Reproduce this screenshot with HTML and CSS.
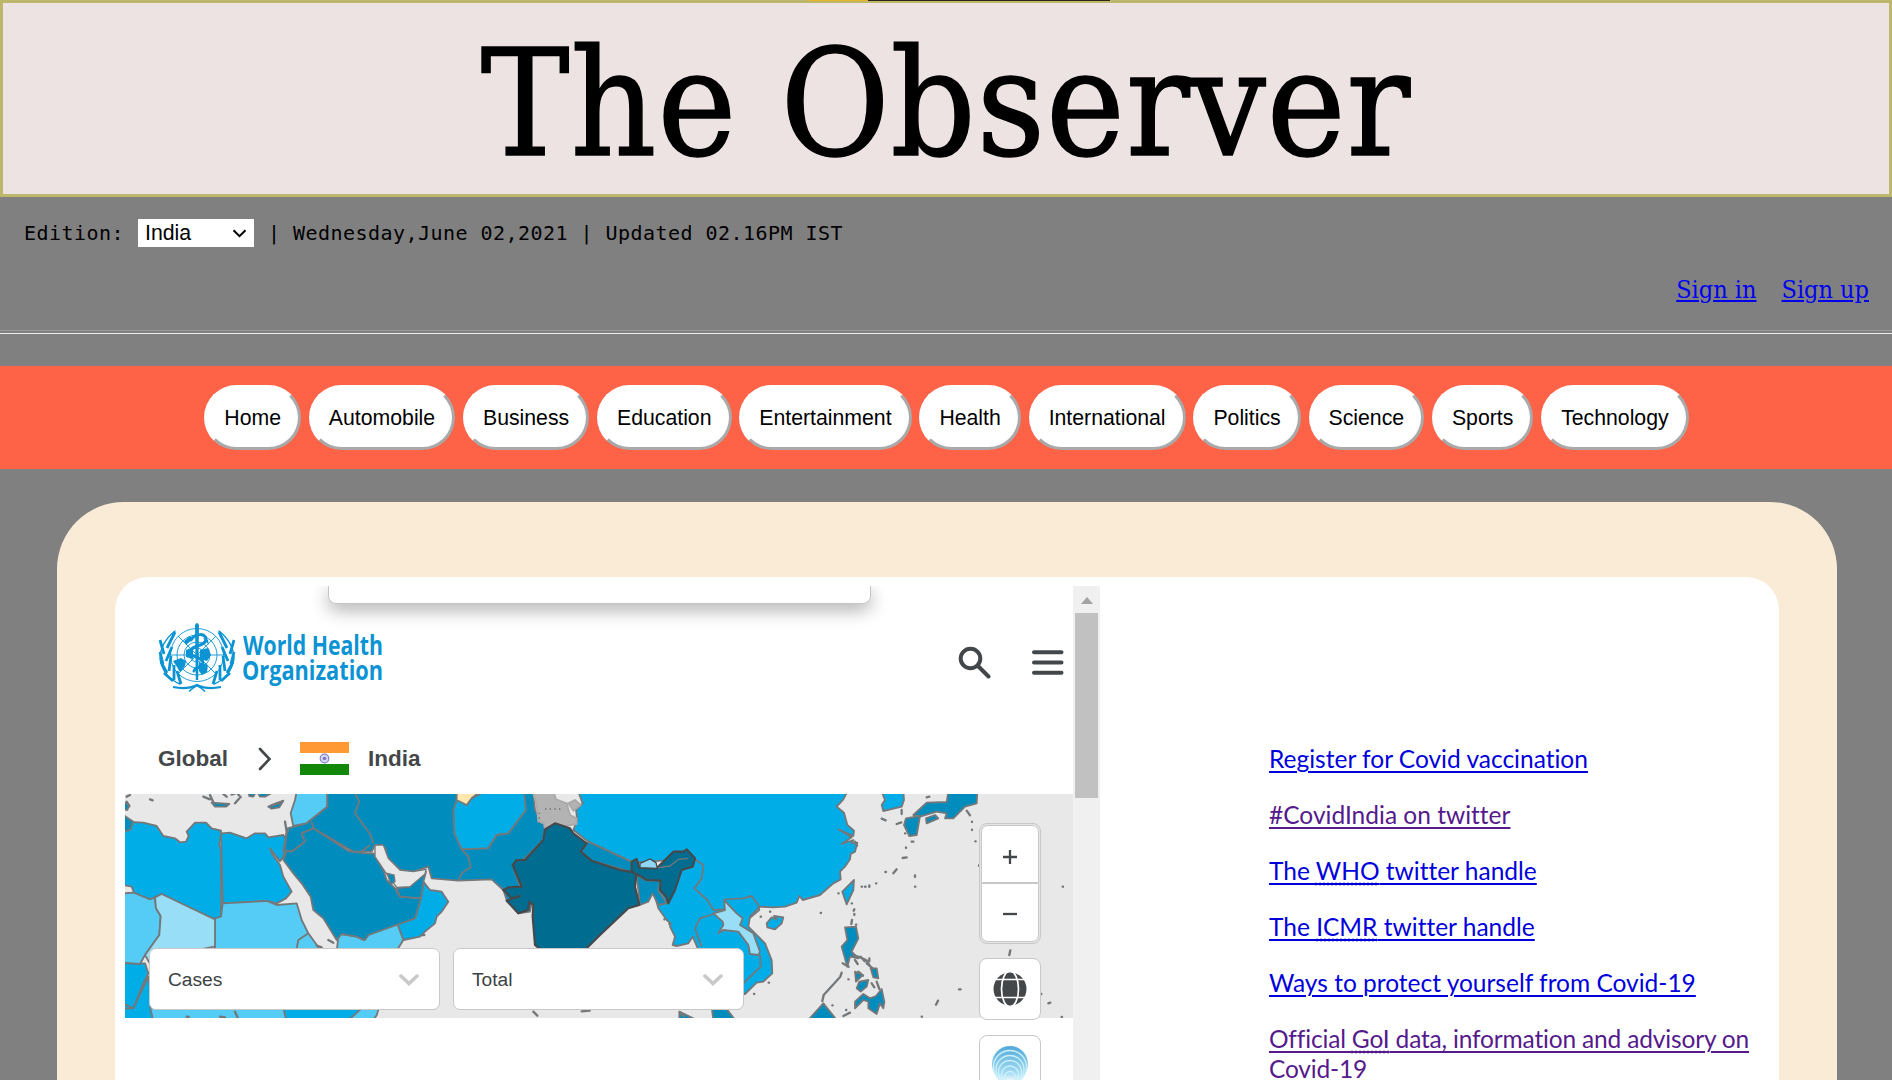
FILE: index.html
```html
<!DOCTYPE html>
<html lang="en">
<head>
<meta charset="utf-8">
<title>The Observer</title>
<link rel="stylesheet" href="styles.css">
</head>
<body>
<header class="masthead"><h1 class="title"><span>The Observer</span></h1><i class="tab-edge"></i></header>

<section class="info">
  <div class="edition"><span>Edition:</span><span class="picker">India<svg width="15" height="9" viewBox="0 0 15 9"><path d="M1.5 1.2l6 6 6-6"/></svg></span><span>| Wednesday,June 02,2021 | Updated 02.16PM IST</span></div>
  <div class="account"><a href="#">Sign in</a><a href="#">Sign up</a></div>
</section>
<hr class="rule">

<nav class="nav">
  <button>Home</button><button>Automobile</button><button>Business</button><button>Education</button><button>Entertainment</button><button>Health</button><button>International</button><button>Politics</button><button>Science</button><button>Sports</button><button>Technology</button>
</nav>

<main class="panel">
  <div class="card">
    <div class="frame">
      <div class="view">
        <div class="popup"></div>
        <div class="who-head">
          <svg class="logo" width="230" height="74" viewBox="155 620 230 74">
            <g fill="none" stroke="#0b93d3">
              <g stroke-width=".9"><circle cx="197" cy="655" r="26.5"/><circle cx="197" cy="655" r="20"/><circle cx="197" cy="655" r="13"/><circle cx="197" cy="655" r="7"/><path d="M170 655h54M178 636l38 38M216 636l-38 38"/></g>
              <path stroke-width="1.4" stroke-linecap="round" d="M175 631q-15 12-15 28 3 18 20 25M219 631q15 12 15 28-3 18-20 25"/>
              <path stroke-width="2.8" d="M167 648l8-16M164 654l-4-14M166 661l6-14M163 664l-3-12M169 671l2-15M167 673l-6-11M174 680l0-15M173 681l-9-8M181 684l-4-13M227 648l-8-16M230 654l4-14M228 661l-6-14M231 664l3-12M225 671l-2-15M227 673l6-11M220 680l0-15M221 681l9-8M213 684l4-13"/>
              <path stroke-width="2.2" d="M173 687q14 3 24-2 10 5 24 2"/>
              <path stroke-width="1.6" d="M189 691.500q4-4 8-6 4 2 8 6"/>
              <path stroke-width="3" stroke-linecap="round" d="M191 640c4-7 15-7 15-1 0 8-16 6-16 13 0 6 13 4 13 11 0 4-8 4-9 8"/>
            </g>
            <g fill="#0b93d3"><path d="M173 661l8-3 5 3-1 5-5 6-3-5zM186 650l7-3v12l-7-2zM200 650l8-2 3 7-4 6-7-2zM199 662l9 3-1 7-5 3-3-4zM184 641l6-5 3 3-7 6zM203 638l5 2 1 5z"/><path d="M195 625q2-4 4 0l-.8 55h-2.4z"/></g>
            <g fill="#0b93d3" font-family="'Open Sans','Noto Sans',sans-serif" font-weight="700" font-size="26"><text x="243" y="655" textLength="140" lengthAdjust="spacingAndGlyphs">World Health</text><text x="242" y="680" textLength="141" lengthAdjust="spacingAndGlyphs">Organization</text></g>
          </svg>
          <div class="tools">
            <svg width="34" height="34" viewBox="957 645 34 34"><circle cx="970.5" cy="658.5" r="9.8"/><path d="M978 666l10.5 10.5"/></svg>
            <svg width="34" height="34" viewBox="1031 645 34 34"><path d="M1034 652.3h27.500M1034 662.500h27.500M1034 672.800h27.500"/></svg>
          </div>
        </div>
        <div class="crumbs">
          <b>Global</b>
          <svg class="sep" width="14" height="24" viewBox="0 0 14 24"><path d="M2 2l9.500 10L2 22"/></svg>
          <svg class="flag" width="49" height="33" viewBox="0 0 49 33"><path fill="#fff" d="M0 0h49v33H0z"/><path fill="#ff9933" d="M0 0h49v11H0z"/><path fill="#138808" d="M0 22h49v11H0z"/><circle cx="24.500" cy="16.500" r="4.300" fill="#d8d8f0" stroke="#8383c8" stroke-width="1.200"/><circle cx="24.500" cy="16.500" r="1.800" fill="#7a7ac2"/></svg>
          <b>India</b>
        </div>
        <div class="map">
          <svg class="land" viewBox="15 12 2844 672" width="948" height="224">
            <g stroke="#75787b" stroke-width="5.500" stroke-linejoin="round">
              <g class="c1">
                <path d="M10 95L70 98 110 108 130 138 165 145 180 157 198 155 206 138 200 125 225 98 258 98 275 115 303 122 303 130 298 165 303 180 303 380 280 390 125 312 105 322 90 328 65 318 42 308 35 290 10 285z"/>
                <path d="M303 130L330 128 380 145 405 130 435 130 445 142 490 135 500 150 490 200 480 214 450 175 458 195 480 225 490 260 515 305 498 325 470 340 440 333 308 340z"/>
                <path d="M1360 120L1372 90 1368 60 1388 40 1375 5 2182 5 2170 28 2150 50 2172 68 2182 105 2202 122 2200 138 2155 118 2195 142 2165 162 2200 150 2195 160 2212 158 2205 185 2192 192 2190 208 2175 230 2160 245 2162 268 2140 280 2100 315 2048 330 2038 318 2030 338 1995 350 1960 352 1920 350 1890 380 1885 410 1935 460 1955 510 1957 550 1930 575 1910 578 1875 612 1700 610 1740 490 1718 440 1705 460 1670 468 1658 465 1665 440 1650 410 1652 400 1640 390 1615 355 1600 300 1720 205 1540 218 1405 155z"/>
                <path d="M1010 30L1040 45 1055 25 1080 12 1085 5H1215L1218 60 1200 85 1165 130 1130 135 1105 175 1025 178 1010 150 1003 130 1000 60z"/>
                <path d="M910 275L930 300 965 305 985 335 965 365 950 380 945 400 915 425 900 440 850 450 832 402 885 385 903 325z"/>
                <path d="M10 520H75L85 550 70 580 40 655 10 655zM10 640L40 655 85 560 105 690H10z"/>
                <path d="M1940 400L1955 382 1970 388 1962 378 1990 382 1985 400 1965 418 1942 412zM2285 5L2295 30 2285 45 2290 63 2345 50 2352 30 2350 5zM2167 305L2202 270 2200 300 2180 343z"/>
              </g>
              <g class="c4">
                <path d="M10 310L42 308 65 318 90 328 105 322 108 355 122 378 118 435 75 495 60 522 10 518z"/>
                <path d="M308 340L440 333 470 345 530 340 545 390 565 430 535 450 528 485H285V385L303 380zM565 430L605 485H528L535 450z"/>
                <path d="M655 440L665 432 710 440 730 450 745 435 832 402 850 450 828 485H650z"/>
                <path d="M530 5H622V50L560 100 520 108 512 70 525 30z"/>
                <path d="M90 650H778L770 676 755 695H100z"/>
              </g>
              <path class="c1" d="M490 655H725L680 695H500z"/>
              <path class="c5" d="M105 322L125 312 285 388V470L255 475 95 530 75 495 118 435 122 378 108 355zM1780 370L1815 360 1812 330 1850 370 1868 385 1860 405 1900 430 1920 485 1915 495 1890 492 1885 465 1855 425 1810 420 1795 430 1810 405 1808 395z"/>
              <g class="c2">
                <path d="M622 5H1010L1010 30 1000 60 1003 130 1025 178 1105 175 1130 135 1165 130 1218 60 1212 5H1240L1245 60 1275 110 1270 150 1215 205 1178 225 1200 290 1150 300 1115 268 1015 272 935 265 925 230 880 245 840 240 800 200 797 175 765 165 755 185 700 185 580 115 545 130 555 155 515 185 490 182 502 115 560 100 622 50z"/>
                <path d="M490 210L500 182 515 185 555 155 545 130 580 115 685 183 740 190 760 190 790 240 800 270 825 295 840 320 903 325 885 385 745 435 735 450 710 440 665 432 650 450 610 385 580 360 572 320 545 280 520 250z"/>
                <path d="M830 295L870 290 918 245 910 275 903 325 840 320zM10 75L40 95 30 120 10 125zM10 35L28 45 22 60 10 58zM445 50L462 42 490 32 478 52 455 56zM275 38L328 42 318 50 285 50zM385 5H408L400 20 388 18zM412 5H462L435 20 420 20z"/>
                <path d="M1405 155L1540 218V248L1415 212 1382 185zM1550 255L1580 272 1622 272 1615 300 1640 340 1615 345 1598 310 1585 335 1560 345zM1150 300L1200 290 1235 340 1230 365 1195 370 1160 330z"/>
                <path d="M2380 75L2420 38 2480 36 2485 5H2572L2570 40 2535 50 2500 85 2475 85 2480 70 2450 65 2400 80zM2418 85L2445 75 2455 85 2420 100zM2358 85L2400 78 2390 135 2368 138 2352 105z"/>
                <path d="M2175 412L2208 410 2215 445 2195 485 2215 505 2190 500 2182 530 2165 470 2182 450zM2205 545L2228 555 2208 575zM2252 535L2270 535 2275 565 2260 562zM2218 575L2245 570 2240 590 2222 605 2210 595zM2285 597L2293 635 2290 655 2280 640 2270 672 2245 655 2245 635 2230 630 2205 655 2205 635 2230 612 2250 625 2268 618zM2065 690L2110 640 2150 690zM1775 650H1815L1845 690H1780zM1678 665L1730 690H1678z"/>
              </g>
              <path fill="none" d="M580 115L575 95M705 10L718 35 705 70 752 135 760 160M1025 178L1045 200 1052 232 1025 250 1015 272M720 188L750 165M500 130L490 210M1720 205L1750 225 1745 265 1723 295 1762 330 1780 360 1815 358M1815 328L1870 325 1895 318 1915 345 1918 360 1888 385M1780 372L1740 385 1725 415 1745 470M1920 495L1922 530 1870 580"/>
              <path fill="#ffe6ad" d="M1010 5H1080L1055 25 1040 45 1010 30z"/>
              <path fill="#b3b3b3" stroke="#aaa" d="M1238 5H1300L1308 28 1340 40 1350 75 1370 85 1370 102 1325 110 1305 100 1290 118 1275 118 1272 100 1255 95 1250 45zM1345 40L1365 30 1382 45 1360 62z"/>
            </g>
            <path d="M1258 68v30M1275 57h50" fill="none" stroke="#6c6f72" stroke-width="4" stroke-dasharray="4 10"/>
            <g class="c3" stroke="#46494b" stroke-width="6.500" stroke-linejoin="round">
              <path d="M1275 118L1305 100 1350 115 1360 130 1400 160 1382 185 1415 212 1500 240 1550 248 1545 290 1558 345 1525 355 1440 435 1400 475 1340 490H1275L1245 465 1238 380 1240 345 1228 335 1225 360 1195 370 1160 332 1200 318 1175 325 1150 300 1165 292 1205 290 1178 225 1190 210 1215 210 1270 150z"/>
              <path d="M1535 245V215L1550 207 1558 233 1610 235 1660 185 1690 185 1700 178 1725 205 1718 230 1685 240 1665 300 1645 340 1638 320 1620 300 1622 272 1580 270 1555 255z"/>
            </g>
            <path fill="none" stroke="#75787b" stroke-width="4" d="M1615 233L1650 228 1675 208 1705 205"/>
            <path fill="#8fd8f5" stroke="#46494b" stroke-width="4" d="M1560 220L1590 207 1608 218 1612 235 1560 233z"/>
            <path fill="#e8e8e8" stroke="#75787b" stroke-width="4" d="M765 165L790 165 805 205 840 240 880 245 918 238 915 252 870 290 830 292 795 245 765 200z"/>
            <path class="c2" stroke="#75787b" stroke-width="4" d="M802 250L822 255 825 275 812 282z"/>
            <g class="isles">
              <path d="M250 20l20 8M270 15l10 22M345 40l12-14M352 10l10 12M310 12l10 8M335 14l15-6M20 35l8 14M20 20l10-5M500 130l5-10M495 95l5 30M90 28l8 3M625 450l15 8M905 435h8M455 47l28-10M590 467l15 5"/>
              <path d="M2420 22l8-2M2540 62l10 14M2345 60v12M2285 86l12 5M2330 102l14-5M2375 155h5M2358 172v2M2348 204l12-2M2320 250l10-12M2296 246h2M2385 256v5M2385 290h1M2225 290h1M2235 290h2M2248 286v5M2268 280h1M2355 130h1M2205 155l6 12M2155 310h1"/>
              <path d="M2195 340h1M2203 358l-2 4M2203 372v3M2196 390l-2 12M2208 404h1M2102 369h1M1922 380h1M1950 365h1M1946 578h1M1902 612h1M1633 388h1M1648 402h1"/>
              <path d="M2165 548l-4 12-50 55-4 18M2200 495l22 8 18 8 12 20M2168 520l18 10M2205 510l8 12M2222 500l12 14M2248 505v8M2240 520l18 15M2190 668l-20 10M2178 660h1M2137 646h1M2185 568h1M2270 575l8 22M2255 580l8 12M2215 545l14 12"/>
              <path d="M2577 226v1M2566 154h1M2556 95v1M2556 119v1M2668 495l3-14M2670 458v1M2517 598h5M2448 644l6-12M2785 640l6-2M2828 290h1M2825 681h1M2405 680h1M2763 612h1"/>
              <path d="M1385 664l24-2M1240 665l12 12M1680 667l12 12M200 680l6 1M345 665l8 18M300 680l15 2"/>
            </g>
          </svg>
          <div class="selects">
            <div class="select">Cases<svg width="20" height="12" viewBox="0 0 20 12"><path d="M2 2l8 7.500L18 2"/></svg></div>
            <div class="select">Total<svg width="20" height="12" viewBox="0 0 20 12"><path d="M2 2l8 7.500L18 2"/></svg></div>
          </div>
          <div class="controls">
            <div class="zoom"><span><svg width="16" height="16" viewBox="0 0 16 16"><path d="M1 8h14M8 1v14"/></svg></span><span><svg width="16" height="16" viewBox="0 0 16 16"><path d="M1 8h14"/></svg></span></div>
            <div class="ctl"><svg width="34" height="34" viewBox="-17 -17 34 34"><circle r="16.500" fill="#444749"/><g fill="none" stroke="#fff" stroke-width="1.700"><ellipse rx="8.500" ry="18"/><path d="M-17-9.500h34M-17 8.500h34"/></g></svg></div>
            <div class="ctl layers"><svg width="38" height="38" viewBox="0 0 38 38"><defs><linearGradient id="g" x1="0" y1="0" x2="0" y2="1"><stop offset="0" stop-color="#52a9d8"/><stop offset=".75" stop-color="#a4dcf2"/><stop offset="1" stop-color="#fff"/></linearGradient></defs><circle cx="19" cy="19" r="18" fill="url(#g)"/><g fill="none" stroke="#cdf0fc" stroke-width="1.300"><circle cx="19" cy="22" r="16.500"/><circle cx="19" cy="24.500" r="14"/><circle cx="19" cy="27" r="11.500"/><circle cx="19" cy="29.500" r="8.500"/><circle cx="19" cy="32" r="5.500"/></g></svg></div>
          </div>
        </div>
      </div>
      <div class="scrollbar"><i class="up"></i><i class="thumb"></i></div>
    </div>
    <ul class="links">
      <li><a href="#">Register for Covid vaccination</a></li>
      <li><a class="seen" href="#">#CovidIndia on twitter</a></li>
      <li><a href="#">The <abbr title="World Health Organization">WHO</abbr> twitter handle</a></li>
      <li><a href="#">The <abbr title="Indian Council of Medical Research">ICMR</abbr> twitter handle</a></li>
      <li><a href="#">Ways to protect yourself from Covid-19</a></li>
      <li><a class="seen tight" href="#">Official <abbr title="Government of India">GoI</abbr> data, information and advisory on<br>Covid-19</a></li>
    </ul>
  </div>
</main>
</body>
</html>
```
FILE: styles.css
```css
* { box-sizing: border-box; }
html, body { height: 1080px; overflow: hidden; }
body { margin: 0; background: #808080; font-family: "Liberation Sans", Arial, sans-serif; color: #000; }

.masthead { position: relative; height: 197px; border: 3px solid #bdb76b; background: #ede3e2; text-align: center; }
.title { height: 191px; margin: 0; font: 400 148px/203px "DejaVu Serif Condensed", "DejaVu Serif", serif; font-stretch: condensed; letter-spacing: 1px; -webkit-text-stroke: 1.5px #000; }
.tab-edge { position: absolute; left: 805px; top: -3px; width: 302px; height: 1px; background: linear-gradient(90deg, #e6b422 60px, #2b2417 60px); }

.info { height: 133px; padding: 22px 23px 0 24px; }
.edition { display: flex; align-items: center; height: 28px; font: 20px/28px "DejaVu Sans Mono", monospace; letter-spacing: .46px; white-space: pre; }
.picker { display: flex; align-items: center; justify-content: space-between; width: 116px; height: 28px; margin: 0 14px; padding: 0 7px; background: #fff; font: 21.300px/28px "Liberation Sans", sans-serif; letter-spacing: 0; }
.picker svg { fill: none; stroke: #000; stroke-width: 2; }
.account { display: flex; justify-content: flex-end; gap: 25px; margin-top: 25px; font: 25px/36px "DejaVu Serif Condensed", "DejaVu Serif", serif; font-stretch: condensed; }
a { color: #0000ee; }
.rule { height: 4px; margin: 0; border: 0; border-top: 1px solid #9a9a9a; border-bottom: 1px solid #eee; }

.nav { display: flex; justify-content: center; align-items: center; gap: 7.800px; height: 103px; margin-top: 32px; padding-left: 1px; background: #ff6347; }
.nav button { height: 65px; padding: 2px 17px 0; border: 3px solid; border-color: #fff #a9a9a9 #a9a9a9 #fff; border-radius: 33px; background: #fff; color: #000; font: 21.250px "Liberation Sans", Arial, sans-serif; }

.panel { width: 1780px; height: 578px; margin: 33px 0 0 57px; padding: 75px 58px 0; overflow: hidden; border-radius: 67px 67px 0 0; background: #faebd7; }
.card { display: flex; width: 1664px; height: 503px; padding: 9px 10px 0; border-radius: 33px 33px 0 0; background: #fff; }
.frame { display: flex; width: 975px; height: 494px; overflow: hidden; }
.view { width: 948px; overflow: hidden; }
.popup { width: 543px; height: 18px; margin-left: 203px; border: 1px solid #c4c4c4; border-top: 0; border-radius: 0 0 8px 8px; box-shadow: 0 6px 18px rgba(0, 0, 0, .32); }
.who-head { display: flex; justify-content: space-between; align-items: flex-start; height: 121px; padding: 16px 8px 0 30px; }
.logo { overflow: visible; }
.tools { display: flex; gap: 40px; margin-top: 25px; }
.tools svg { fill: none; stroke: #444749; stroke-width: 4; stroke-linecap: round; }
.crumbs { display: flex; align-items: center; height: 69px; padding: 0 0 2px 33px; color: #444749; font-size: 22.500px; }
.crumbs .sep { margin: 0 28px 0 30px; fill: none; stroke: #444749; stroke-width: 2.600; stroke-linecap: round; }
.crumbs .flag { margin-right: 19px; }

.map { position: relative; height: 224px; background: #e8e8e8; }
.land { display: block; }
.c1 { fill: #00ade6; }
.c2 { fill: #008dbd; }
.c3 { fill: #006c8f; }
.c4 { fill: #55ccf5; }
.c5 { fill: #99def7; }
.isles { fill: none; stroke: #75787b; stroke-width: 7; stroke-linecap: round; }
.selects { position: absolute; left: 24px; top: 154px; display: flex; gap: 13px; }
.select { display: flex; align-items: center; justify-content: space-between; width: 291px; height: 62px; padding: 1px 20px 0 18px; border: 1px solid #c8c8c8; border-radius: 7px; background: #fff; color: #3c4245; font-size: 19.200px; }
.select svg { fill: none; stroke: #c8c8c8; stroke-width: 3.500; stroke-linecap: round; }
.controls { position: absolute; left: 854px; top: 29px; width: 62px; display: flex; flex-direction: column; gap: 14px; }
.zoom { height: 121px; padding: 1px; border: 1px solid #c8c8c8; border-radius: 8px; background: #e4e4e4; }
.zoom span { display: flex; align-items: center; justify-content: center; height: 58px; padding-top: 6px; border: 1px solid #c8c8c8; border-radius: 7px 7px 0 0; background: #fff; }
.zoom span + span { height: 59px; padding-top: 3px; border-radius: 0 0 7px 7px; }
.zoom svg { stroke: #444749; stroke-width: 2.300; }
.ctl { display: flex; align-items: center; justify-content: center; height: 62px; border: 1px solid #c8c8c8; border-radius: 8px; background: #fff; }
.layers { margin-top: 1px; padding-bottom: 4px; }
.scrollbar { width: 27px; padding: 11px 2px 0; background: #f0f0f0; }
.up { display: block; width: 0; margin: 0 auto 9px; border: 6.500px solid transparent; border-top: 0; border-bottom: 7px solid #a3a3a3; }
.thumb { display: block; height: 185px; background: #c1c1c1; }

.links { margin: 158px 0 0 169px; padding: 0; list-style: none; font: 24.500px/30px Lato, sans-serif; font-variant-ligatures: none; white-space: nowrap; }
.links li { margin-bottom: 26px; }
.links a { color: #0000dc; text-decoration-thickness: 2px; text-underline-offset: 3px; }
.links a.seen { color: #551a8b; }
.links .tight { letter-spacing: -.17px; }
abbr { text-decoration: underline dotted; }
```
